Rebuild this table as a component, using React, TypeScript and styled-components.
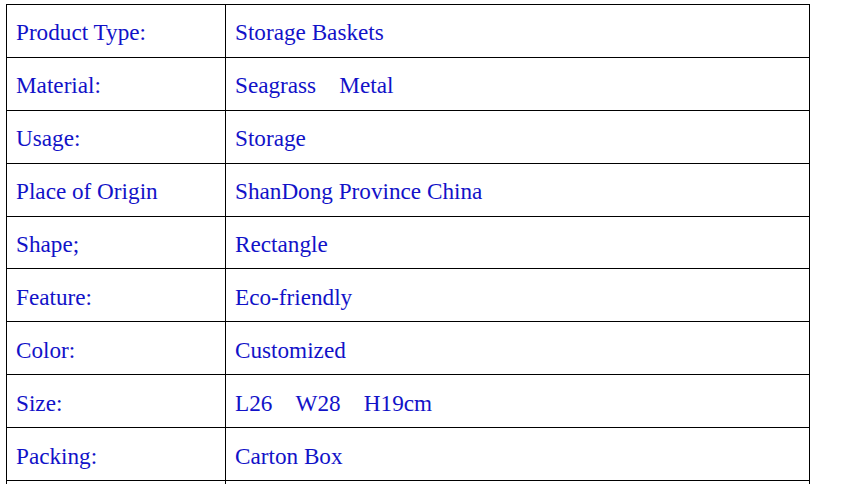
import React from "react";
import styled, { createGlobalStyle } from "styled-components";

const GlobalStyle = createGlobalStyle`
  html, body {
    margin: 0;
    padding: 0;
    background: #fff;
    overflow: hidden;
  }
`;

const Page = styled.div`
  padding: 4px 0 0 6px;
  height: 484px;
  overflow: hidden;
`;

const SpecTable = styled.table`
  border-collapse: collapse;
  width: 804px;
  table-layout: fixed;
  font-family: "Liberation Serif", "Times New Roman", serif;
  font-size: 23.2px;
  color: #1212c8;
`;

const Row = styled.tr`
  height: 52.9px;
`;

const Cell = styled.td<{ $label?: boolean }>`
  border: 1.5px solid #000;
  padding: 4px 9px 0;
  vertical-align: middle;
  width: ${(p) => (p.$label ? "200px" : "auto")};
  white-space: pre;
`;

const specs: [string, string][] = [
  ["Product Type:", "Storage Baskets"],
  ["Material:", "Seagrass\u00a0\u00a0\u00a0\u00a0Metal"],
  ["Usage:", "Storage"],
  ["Place of Origin", "ShanDong Province China"],
  ["Shape;", "Rectangle"],
  ["Feature:", "Eco-friendly"],
  ["Color:", "Customized"],
  ["Size:", "L26\u00a0\u00a0\u00a0\u00a0W28\u00a0\u00a0\u00a0\u00a0H19cm"],
  ["Packing:", "Carton Box"],
  ["", ""],
];

export default function App() {
  return (
    <>
      <GlobalStyle />
      <Page>
        <SpecTable>
          <tbody>
            {specs.map(([label, value], i) => (
              <Row key={i}>
                <Cell $label>{label}</Cell>
                <Cell>{value}</Cell>
              </Row>
            ))}
          </tbody>
        </SpecTable>
      </Page>
    </>
  );
}
